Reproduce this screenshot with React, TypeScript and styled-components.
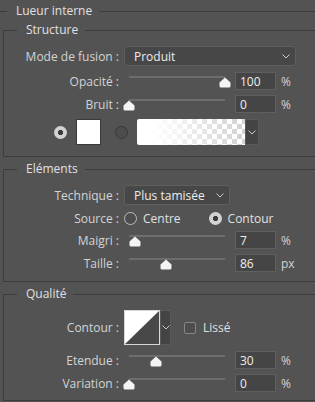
import React from "react";
import styled, { createGlobalStyle } from "styled-components";

const Global = createGlobalStyle`
  html, body { margin: 0; padding: 0; background: #535353; }
  body {
    width: 315px; height: 402px; overflow: hidden;
    font-family: "Open Sans", "Noto Sans", sans-serif;
    font-size: 12px; color: #d6d6d6;
  }
  * { box-sizing: border-box; }
`;

const Page = styled.div`
  width: 315px;
  height: 402px;
  padding-top: 3px;
  background: #535353;
`;

const Outer = styled.fieldset`
  margin: 0;
  padding: 3px 0 0 0;
  border: none;
  border-top: 1px solid #3d3d3d;
  min-width: 0;
`;

const Legend = styled.legend<{ $ml: number }>`
  margin-left: ${(p) => p.$ml}px;
  padding: 0 7px 0 9px;
  height: 16px;
  line-height: 16px;
  font-size: 12px;
  color: #e0e0e0;
`;

const Group = styled.fieldset<{ $mt: number; $pt: number; $pb: number }>`
  margin: ${(p) => p.$mt}px 0 0 3px;
  padding: ${(p) => p.$pt}px 0 ${(p) => p.$pb}px 0;
  border: 1px solid #3d3d3d;
  border-right: none;
  min-width: 0;
`;

const Row = styled.div<{ $mt?: number; $h?: number }>`
  display: flex;
  align-items: center;
  height: ${(p) => p.$h ?? 18}px;
  margin-top: ${(p) => p.$mt ?? 0}px;
`;

const Label = styled.span`
  width: 115px;
  flex: none;
  margin-right: 5px;
  text-align: right;
  white-space: nowrap;
  color: #d4d4d4;
`;

const SelectBox = styled.div<{ $w: number }>`
  width: ${(p) => p.$w}px;
  height: 20px;
  flex: none;
  display: flex;
  align-items: center;
  justify-content: space-between;
  padding: 0 5px 0 9px;
  border: 1px solid #5e5e5e;
  border-radius: 3px;
  background: #474747;
  color: #ececec;
  white-space: nowrap;
`;

const Chevron = () => (
  <svg width="8" height="5" viewBox="0 0 8 5">
    <polyline points="0.5,0.5 4,4 7.5,0.5" fill="none" stroke="#c8c8c8" strokeWidth="1" />
  </svg>
);

const SliderWrap = styled.div`
  position: relative;
  width: 107px;
  height: 18px;
  flex: none;
`;

const Track = styled.div`
  position: absolute;
  left: 5px;
  right: 6px;
  top: 4px;
  height: 2px;
  background: #6d6d6d;
`;

const ThumbBox = styled.svg`
  position: absolute;
  top: 5px;
  width: 12px;
  height: 11px;
`;

const Slider = ({ pct }: { pct: number }) => (
  <SliderWrap>
    <Track />
    <ThumbBox viewBox="0 0 12 11" style={{ left: 5 + (pct / 100) * 96 - 6 }}>
      <path d="M6 0.5 L11.5 5.5 L11.5 9 Q11.5 10.5 10 10.5 L2 10.5 Q0.5 10.5 0.5 9 L0.5 5.5 Z" fill="#f4f4f4" />
    </ThumbBox>
  </SliderWrap>
);

const NumInput = styled.div`
  width: 41px;
  height: 18px;
  flex: none;
  margin-left: 4px;
  padding-left: 4px;
  display: flex;
  align-items: center;
  border: 1px solid #5f5f5f;
  background: #454545;
  color: #eeeeee;
`;

const Unit = styled.span`
  margin-left: 5px;
  color: #d4d4d4;
`;

const SwatchRow = styled.div`
  display: flex;
  align-items: center;
  height: 26px;
  margin-top: 6px;
  padding-left: 50px;
`;

const Radio = styled.span<{ $on?: boolean; $dim?: boolean }>`
  width: 13px;
  height: 13px;
  flex: none;
  border-radius: 50%;
  ${(p) =>
    p.$on
      ? `background: radial-gradient(circle, #3a3a3a 0 2.3px, #d2d2d2 2.9px);`
      : `border: 1px solid ${p.$dim ? "#383838" : "#bdbdbd"}; background: #4d4d4d;`}
`;

const ColorSquare = styled.div`
  width: 25px;
  height: 26px;
  flex: none;
  margin-left: 9px;
  border: 1px solid #3a3a3a;
  background: #ffffff;
`;

const GradientSwatch = styled.div`
  width: 108px;
  height: 26px;
  flex: none;
  margin-left: 9px;
  border-radius: 2px 0 0 2px;
  background:
    linear-gradient(to right, #ffffff 15%, rgba(255, 255, 255, 0) 95%),
    repeating-conic-gradient(#d4d4d4 0 25%, #ffffff 0 50%) 0 0 / 10px 10px;
`;

const DropBtn = styled.div<{ $w: number; $h: number }>`
  width: ${(p) => p.$w}px;
  height: ${(p) => p.$h}px;
  flex: none;
  display: flex;
  align-items: center;
  justify-content: center;
  border: 1px solid #5a5a5a;
  background: #444444;
`;

const Gap = styled.span<{ $w: number }>`
  width: ${(p) => p.$w}px;
  flex: none;
`;

const Option = styled.span`
  display: flex;
  align-items: center;
  gap: 6px;
  color: #e0e0e0;
`;

const ContourSwatch = styled.svg`
  width: 36px;
  height: 35px;
  flex: none;
  display: block;
`;

const Checkbox = styled.span`
  width: 12px;
  height: 12px;
  flex: none;
  margin-left: 13px;
  border: 1px solid #858585;
  border-radius: 2px;
  background: #4d4d4d;
`;

const CheckLabel = styled.span`
  margin-left: 7px;
  color: #e0e0e0;
`;

const SliderRow = ({ label, pct, value, unit, mt }: { label: string; pct: number; value: string; unit: string; mt: number }) => (
  <Row $mt={mt}>
    <Label>{label}</Label>
    <Slider pct={pct} />
    <NumInput>{value}</NumInput>
    <Unit>{unit}</Unit>
  </Row>
);

export default function App() {
  return (
    <>
      <Global />
      <Page>
        <Outer>
          <Legend $ml={7}>Lueur interne</Legend>

          <Group $mt={0} $pt={8} $pb={11}>
            <Legend $ml={13}>Structure</Legend>
            <Row $h={20}>
              <Label>Mode de fusion :</Label>
              <SelectBox $w={172}>
                <span>Produit</span>
                <Chevron />
              </SelectBox>
            </Row>
            <SliderRow label="Opacité :" pct={100} value="100" unit="%" mt={6} />
            <SliderRow label="Bruit :" pct={0} value="0" unit="%" mt={5} />
            <SwatchRow>
              <Radio $on />
              <ColorSquare />
              <Gap $w={14} />
              <Radio $dim />
              <GradientSwatch />
              <DropBtn $w={14} $h={26}>
                <Chevron />
              </DropBtn>
            </SwatchRow>
          </Group>

          <Group $mt={4} $pt={8} $pb={9}>
            <Legend $ml={13}>Eléments</Legend>
            <Row $h={20}>
              <Label>Technique :</Label>
              <SelectBox $w={106}>
                <span>Plus tamisée</span>
                <Chevron />
              </SelectBox>
            </Row>
            <Row $mt={4}>
              <Label>Source :</Label>
              <Option>
                <Radio />
                Centre
              </Option>
              <Gap $w={28} />
              <Option>
                <Radio $on />
                Contour
              </Option>
            </Row>
            <SliderRow label="Maigri :" pct={6} value="7" unit="%" mt={4} />
            <SliderRow label="Taille :" pct={39} value="86" unit="px" mt={5} />
          </Group>

          <Group $mt={4} $pt={8} $pb={8}>
            <Legend $ml={13}>Qualité</Legend>
            <Row $h={35}>
              <Label>Contour :</Label>
              <ContourSwatch viewBox="0 0 36 35">
                <rect x="0" y="0" width="36" height="35" fill="#484848" />
                <polygon points="0,0 36,0 0,35" fill="#ffffff" />
                <rect x="0.5" y="0.5" width="35" height="34" fill="none" stroke="#d8d8d8" strokeWidth="1" />
              </ContourSwatch>
              <DropBtn $w={11} $h={35}>
                <Chevron />
              </DropBtn>
              <Checkbox />
              <CheckLabel>Lissé</CheckLabel>
            </Row>
            <SliderRow label="Etendue :" pct={28} value="30" unit="%" mt={6} />
            <SliderRow label="Variation :" pct={0} value="0" unit="%" mt={5} />
          </Group>
        </Outer>
      </Page>
    </>
  );
}
